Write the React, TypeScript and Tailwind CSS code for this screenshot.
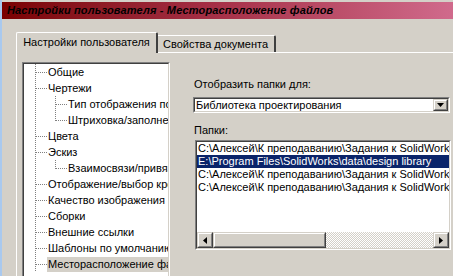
import React from 'react';

const treeItems: { label: string; level: 1 | 2; last?: boolean; selected?: boolean }[] = [
  { label: 'Общие', level: 1 },
  { label: 'Чертежи', level: 1 },
  { label: 'Тип отображения по умолчанию', level: 2 },
  { label: 'Штриховка/заполнение области', level: 2, last: true },
  { label: 'Цвета', level: 1 },
  { label: 'Эскиз', level: 1 },
  { label: 'Взаимосвязи/привязки', level: 2, last: true },
  { label: 'Отображение/выбор кромок', level: 1 },
  { label: 'Качество изображения', level: 1 },
  { label: 'Сборки', level: 1 },
  { label: 'Внешние ссылки', level: 1 },
  { label: 'Шаблоны по умолчанию', level: 1 },
  { label: 'Месторасположение файлов', level: 1, selected: true },
];

const folders = [
  'C:\\Алексей\\К преподаванию\\Задания к SolidWorks\\Библиотека',
  'E:\\Program Files\\SolidWorks\\data\\design library',
  'C:\\Алексей\\К преподаванию\\Задания к SolidWorks\\Детали',
  'C:\\Алексей\\К преподаванию\\Задания к SolidWorks\\Сборки',
];

function Connector({ level, last }: { level: 1 | 2; last?: boolean }) {
  const w = level === 1 ? 24 : 44;
  const dot = { stroke: '#808080', strokeWidth: 1, strokeDasharray: '1 1', shapeRendering: 'crispEdges' as const };
  return (
    <svg width={w} height={16} className="shrink-0">
      <line x1={11.5} y1={0} x2={11.5} y2={16} {...dot} />
      {level === 1 ? (
        <line x1={12} y1={8.5} x2={23} y2={8.5} {...dot} />
      ) : (
        <>
          <line x1={31.5} y1={0} x2={31.5} y2={last ? 9 : 16} {...dot} />
          <line x1={32} y1={8.5} x2={43} y2={8.5} {...dot} />
        </>
      )}
    </svg>
  );
}

// classic sunken 2px frame
function Sunken({ className, children }: { className?: string; children: React.ReactNode }) {
  return (
    <div className={'border border-t-[#808080] border-l-[#808080] border-b-white border-r-white ' + (className ?? '')}>
      <div className="h-full w-full border border-t-[#404040] border-l-[#404040] border-b-[#d4d0c8] border-r-[#d4d0c8] bg-white overflow-hidden">
        {children}
      </div>
    </div>
  );
}

function Raised({ className, children }: { className?: string; children?: React.ReactNode }) {
  return (
    <div className={'border border-t-[#d4d0c8] border-l-[#d4d0c8] border-b-[#404040] border-r-[#404040] ' + (className ?? '')}>
      <div className="h-full w-full border border-t-white border-l-white border-b-[#808080] border-r-[#808080] bg-[#d4d0c8] flex items-center justify-center">
        {children}
      </div>
    </div>
  );
}

export default function App() {
  return (
    <div className="w-[453px] h-[276px] overflow-hidden flex bg-[#d4d0c8] text-[11px] text-black font-['Liberation_Sans',Arial,sans-serif]">
      <div className="w-[2px] shrink-0 bg-[#a9c9ef]" />
      <div className="flex-1 flex flex-col min-w-0">
        <div className="h-[2px] shrink-0" />
        {/* Title bar */}
        <div className="h-[17px] shrink-0 flex items-center pl-[5px] bg-gradient-to-r from-[#7a0000] via-[#a8324a] to-[#d06a8c]">
          <span className="font-bold italic text-[11px] tracking-[0.15px] leading-none whitespace-nowrap">
            Настройки пользователя - Месторасположение файлов
          </span>
        </div>

        {/* Tabs */}
        <div className="h-[13px] shrink-0" />
        <div className="flex items-end h-[21px] shrink-0 pl-[14px] relative z-10">
          <div className="w-[142px] h-[21px] flex items-center justify-center border-l border-t border-white border-r-2 border-r-[#404040] rounded-t-[2px] bg-[#d4d0c8] pb-[1px]">
            Настройки пользователя
          </div>
          <div className="w-[118px] h-[17px] mb-[1px] flex items-center pl-[5px] border-t border-white border-r-2 border-r-[#404040] rounded-tr-[2px] whitespace-nowrap">
            Свойства документа
          </div>
        </div>

        {/* Panel */}
        <div className="flex-1 ml-[14px] -mt-[1px] border-l border-t border-white flex pl-[5px] pt-[9px] min-h-0">
          {/* Tree */}
          <Sunken className="w-[148px] h-[240px] shrink-0">
            <div className="flex flex-col">
              {treeItems.map((it, i) => (
                <div key={i} className="flex items-center h-[16px] whitespace-nowrap">
                  <Connector level={it.level} last={it.last} />
                  <span className={'leading-[15px] h-[15px] px-[1px] -ml-[1px] ' + (it.selected ? 'bg-[#d4d0c8] flex-1' : '')}>
                    {it.label}
                  </span>
                </div>
              ))}
            </div>
          </Sunken>

          {/* Right side */}
          <div className="flex flex-col ml-[23px] flex-1 min-w-0">
            <div className="h-[16px] shrink-0" />
            <div className="leading-[13px] pl-[1px]">Отобразить папки для:</div>
            <div className="h-[6px] shrink-0" />
            <Sunken className="w-[257px] h-[16px] shrink-0">
              <div className="flex items-center h-full">
                <span className="flex-1 pl-[1px] leading-[12px] whitespace-nowrap">Библиотека проектирования</span>
                <Raised className="w-[15px] h-[12px]">
                  <svg width="7" height="4" viewBox="0 0 7 4"><path d="M0 0h7L3.5 4z" fill="#000" /></svg>
                </Raised>
              </div>
            </Sunken>
            <div className="h-[11px] shrink-0" />
            <div className="leading-[13px] pl-[1px]">Папки:</div>
            <div className="h-[3px] shrink-0" />
            <Sunken className="w-[256px] h-[110px] ml-[2px] shrink-0">
              <div className="flex flex-col h-full">
                <div className="flex-1 flex flex-col">
                  {folders.map((f, i) => (
                    <div
                      key={i}
                      className={'h-[13px] leading-[13px] pl-[1px] whitespace-nowrap ' + (i === 1 ? 'bg-[#0a246a] text-white' : '')}
                    >
                      {f}
                    </div>
                  ))}
                </div>
                {/* Horizontal scrollbar */}
                <div className="h-[16px] flex shrink-0">
                  <Raised className="w-[16px] h-[16px] shrink-0">
                    <svg width="4" height="7" viewBox="0 0 4 7"><path d="M4 0v7L0 3.5z" fill="#000" /></svg>
                  </Raised>
                  <Raised className="w-[113px] h-[16px] shrink-0" />
                  <div className="flex-1 bg-[repeating-conic-gradient(#d4d0c8_0_25%,#ffffff_0_50%)] bg-[size:2px_2px]" />
                  <Raised className="w-[16px] h-[16px] shrink-0">
                    <svg width="4" height="7" viewBox="0 0 4 7"><path d="M0 0v7L4 3.5z" fill="#000" /></svg>
                  </Raised>
                </div>
              </div>
            </Sunken>
          </div>
        </div>
      </div>
    </div>
  );
}
